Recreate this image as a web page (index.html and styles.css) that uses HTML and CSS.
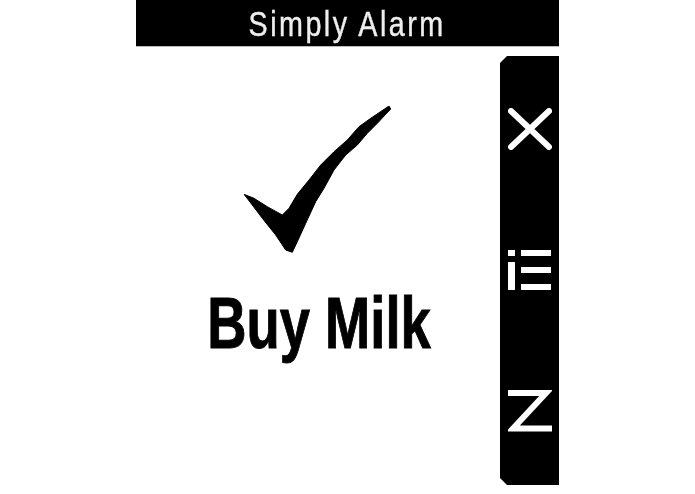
FILE: index.html
```html
<!DOCTYPE html>
<html lang="en">
<head>
<meta charset="utf-8">
<title>Simply Alarm</title>
<link rel="stylesheet" href="styles.css">
</head>
<body>
<div class="screen">
  <header class="title-bar"><span class="title">Simply Alarm</span></header>
  <div class="body-row">
    <main class="content">
      <svg class="check" viewBox="0 0 148 147" aria-hidden="true">
        <path d="M0 88.3 L10 92.3 L23.3 100.7 L38.3 109 L45 102.3 L53.3 88.3 L65 74 L76.7 59 L90 45.7 L103.3 34 L115 20.7 L126.7 12.3 L145 0 L146.7 3 L133.3 17.3 L123.3 27.3 L113.3 39 L101.7 49 L90 64 L80 82.3 L71.7 95.7 L61.7 117.3 L53.3 135.7 L48.3 146.3 L41.7 144 L31.7 129 L18.3 112.3 L8.3 99 Z"/>
      </svg>
      <h1 class="label"><span class="label-text">Buy Milk</span></h1>
    </main>
    <aside class="rail">
      <svg class="rail-icon" viewBox="0 0 44 42" aria-hidden="true"><path class="stroke round" d="M3 3 L41 39 M41 3 L3 39"/></svg>
      <svg class="rail-icon" viewBox="0 0 44 42" aria-hidden="true">
        <rect class="fill" x="0" y="1" width="7" height="6"/>
        <rect class="fill" x="0" y="13" width="7" height="28"/>
        <rect class="fill" x="13" y="1" width="30" height="6"/>
        <rect class="fill" x="13" y="18" width="30" height="6"/>
        <rect class="fill" x="13" y="35" width="30" height="6"/>
      </svg>
      <svg class="rail-icon" viewBox="0 0 44 42" aria-hidden="true"><path class="stroke" d="M0 3 H38 L5 38.5 H44"/></svg>
    </aside>
  </div>
</div>
</body>
</html>
```

FILE: styles.css
```css
html, body {
  margin: 0;
  height: 494px;
  overflow: hidden;
  background: #fff;
}

.screen {
  width: 423px;
  height: 494px;
  margin-left: 136px;
  display: flex;
  flex-direction: column;
  font-family: "Liberation Sans", Arial, sans-serif;
}

.title-bar {
  flex: none;
  height: 46px;
  background: #000;
  border-bottom: 1px solid #bbb;
  display: flex;
  align-items: center;
  justify-content: center;
}

.title {
  color: #eee;
  font-size: 35px;
  line-height: 46px;
  letter-spacing: 3px;
  white-space: nowrap;
  -webkit-text-stroke: 0.4px #eee;
  transform: translate(0, 1px) scaleX(0.82);
  filter: blur(0.5px);
}

.body-row {
  flex: 1;
  min-height: 0;
  display: flex;
}

.content {
  flex: 1;
  display: flex;
  flex-direction: column;
  align-items: center;
  padding-top: 59px;
}

.check {
  width: 148px;
  height: 147px;
  fill: #000;
  stroke: #000;
  stroke-width: 1;
  filter: blur(0.6px);
}

.label {
  margin: 30px 0 0 2px;
  font-size: 72px;
  font-weight: 700;
  line-height: 80px;
  white-space: nowrap;
  color: #000;
}

.label-text {
  display: inline-block;
  transform: scaleX(0.755);
  -webkit-text-stroke: 1px #000;
  filter: blur(0.5px);
}

.rail {
  flex: none;
  width: 59px;
  margin: 9px 0 9px;
  box-sizing: border-box;
  padding: 52px 7px 53px 8px;
  background: #000;
  clip-path: polygon(7px 0, 100% 0, 100% 100%, 7px 100%, 0 calc(100% - 7px), 0 7px);
  display: flex;
  flex-direction: column;
  justify-content: space-between;
  align-items: center;
}

.rail-icon {
  display: block;
  width: 44px;
  height: 42px;
  filter: blur(0.6px);
}

.stroke {
  fill: none;
  stroke: #fff;
  stroke-width: 6;
  stroke-linejoin: miter;
  stroke-miterlimit: 10;
}

.round {
  stroke-width: 6;
  stroke-linecap: round;
}

.fill {
  fill: #fff;
}
```
